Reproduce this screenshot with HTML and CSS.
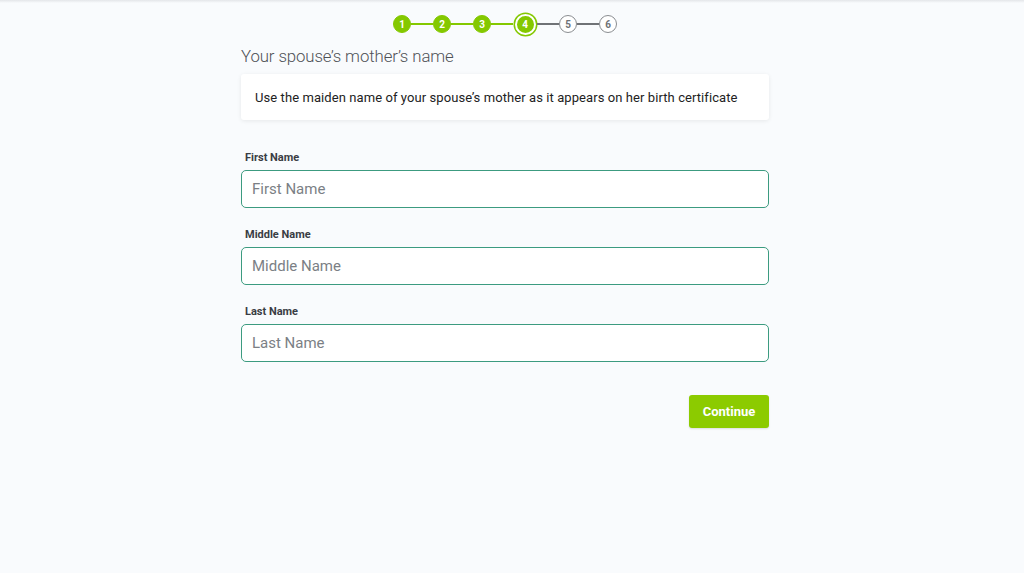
FILE: index.html
```html
<!DOCTYPE html>
<html>
<head>
	<title>Spouse's mother</title>
	<link rel="stylesheet" href="styles.css">
</head>
<body>
	<div class="top-bar"></div>
	<section class="form-wrap">
		<div class="stepper">
			<span class="step done">1</span>
			<span class="link done"></span>
			<span class="step done">2</span>
			<span class="link done"></span>
			<span class="step done">3</span>
			<span class="link done"></span>
			<span class="step current">4</span>
			<span class="link"></span>
			<span class="step">5</span>
			<span class="link"></span>
			<span class="step">6</span>
		</div>
		<h2 class="title">Your spouse’s mother’s name</h2>
		<div class="hint">Use the maiden name of your spouse’s mother as it appears on her birth certificate</div>

		<div class="field">
			<label for="first">First Name</label>
			<input id="first" type="text" placeholder="First Name">
		</div>
		<div class="field">
			<label for="middle">Middle Name</label>
			<input id="middle" type="text" placeholder="Middle Name">
		</div>
		<div class="field">
			<label for="last">Last Name</label>
			<input id="last" type="text" placeholder="Last Name">
		</div>

		<div class="actions">
			<button class="btn-continue">Continue</button>
		</div>
	</section>
</body>
</html>
```

FILE: styles.css
```css
*{
	margin: 0;
	padding: 0;
	box-sizing: border-box;
	font-family: Roboto, "Liberation Sans", sans-serif;
}
body{
	background: #f9fbfd;
	width: 1024px;
	height: 573px;
	overflow: hidden;
}
.top-bar{
	height: 3px;
	background: linear-gradient(#e4e6e9, #f9fbfd);
}
.form-wrap{
	width: 528px;
	margin-left: 241px;
}
.stepper{
	display: flex;
	justify-content: center;
	align-items: center;
	height: 24px;
	margin-top: 9px;
}
.step{
	width: 18px;
	height: 18px;
	border-radius: 50%;
	border: solid 1.5px #8a8d91;
	background: #fff;
	color: #6f7276;
	font-size: 10px;
	font-weight: 700;
	display: flex;
	align-items: center;
	justify-content: center;
}
.step.done{
	background: #84c800;
	border-color: #84c800;
	color: #fff;
}
.step.current{
	width: 21px;
	height: 21px;
	margin: 0 1.5px;
	background: #84c800;
	border: solid 2px #fff;
	box-shadow: 0 0 0 1.5px #84c800;
	color: #fff;
}
.link{
	width: 22px;
	height: 1.5px;
	background: #6f7276;
}
.link.done{
	background: #84c800;
}
.title{
	font-size: 16.8px;
	font-weight: 300;
	color: #4f5257;
	margin-top: 9px;
	line-height: 22px;
	letter-spacing: -0.1px;
}
.hint{
	margin-top: 7px;
	background: #fff;
	box-shadow: 0 1px 4px rgba(0,0,0,0.08);
	border-radius: 3px;
	height: 46px;
	padding: 0 14px;
	display: flex;
	align-items: center;
	font-size: 13px;
	letter-spacing: 0.08px;
	color: #222;
}
.field{
	margin-top: 31px;
}
.field + .field{
	margin-top: 20px;
}
.field label{
	display: block;
	font-size: 11px;
	font-weight: 700;
	color: #3a3d44;
	padding-left: 4px;
	line-height: 14px;
	margin-bottom: 5px;
}
.field input{
	width: 100%;
	height: 38px;
	border: solid 1px #3c9b80;
	border-radius: 5px;
	background: #fff;
	padding: 0 10px;
	font-size: 15px;
	color: #222;
	outline: none;
}
.field input::placeholder{
	color: #7b7f85;
}
.actions{
	display: flex;
	justify-content: flex-end;
	margin-top: 33px;
}
.btn-continue{
	width: 80px;
	height: 33px;
	background: #8ccb00;
	color: #fff;
	border: none;
	border-radius: 3px;
	font-size: 13px;
	font-weight: 700;
	box-shadow: 0 1px 2px rgba(0,0,0,0.12);
}
```
